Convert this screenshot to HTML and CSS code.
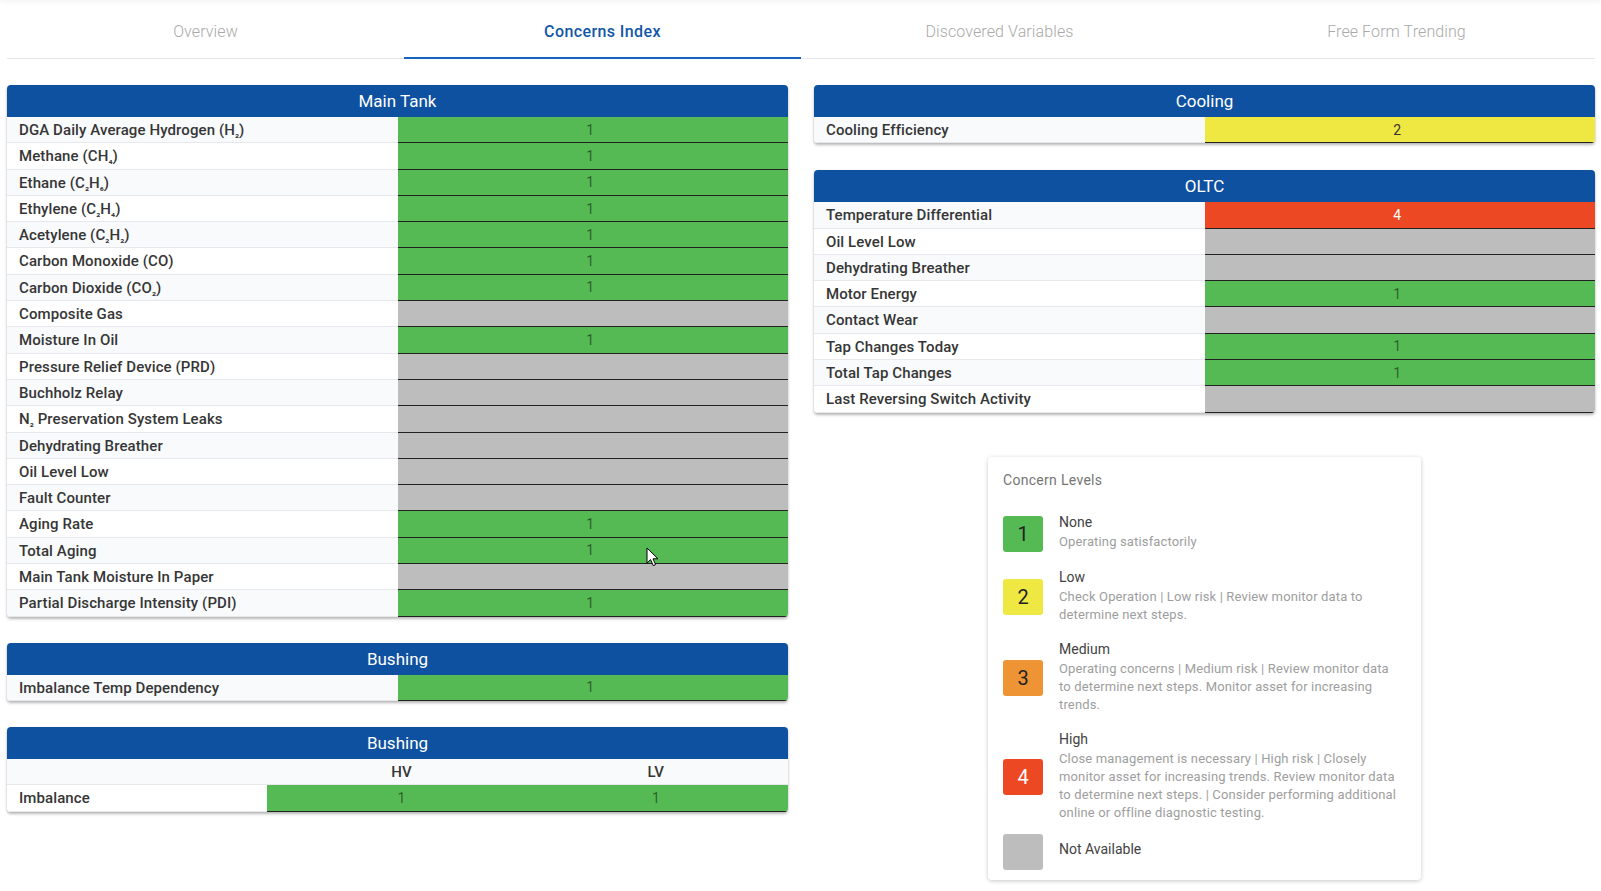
FILE: index.html
```html
<!DOCTYPE html>
<html lang="en">
<head>
<meta charset="utf-8">
<title>Concerns Index</title>
<link rel="stylesheet" href="styles.css">
</head>
<body>
<div class="topbar"></div>

<nav class="tabs">
  <a class="tab">Overview</a>
  <a class="tab active">Concerns Index</a>
  <a class="tab">Discovered Variables</a>
  <a class="tab">Free Form Trending</a>
</nav>

<main class="dashboard">
  <section class="column column-left">
    <div class="panel">
      <div class="panel-title">Main Tank</div>
      <div class="panel-body">
        <div class="row"><span class="label">DGA Daily Average Hydrogen (H<span class="sub">₂</span>)</span><span class="value lvl-1">1</span></div>
        <div class="row"><span class="label">Methane (CH<span class="sub">₄</span>)</span><span class="value lvl-1">1</span></div>
        <div class="row"><span class="label">Ethane (C<span class="sub">₂</span>H<span class="sub">₆</span>)</span><span class="value lvl-1">1</span></div>
        <div class="row"><span class="label">Ethylene (C<span class="sub">₂</span>H<span class="sub">₄</span>)</span><span class="value lvl-1">1</span></div>
        <div class="row"><span class="label">Acetylene (C<span class="sub">₂</span>H<span class="sub">₂</span>)</span><span class="value lvl-1">1</span></div>
        <div class="row"><span class="label">Carbon Monoxide (CO)</span><span class="value lvl-1">1</span></div>
        <div class="row"><span class="label">Carbon Dioxide (CO<span class="sub">₂</span>)</span><span class="value lvl-1">1</span></div>
        <div class="row"><span class="label">Composite Gas</span><span class="value lvl-na"></span></div>
        <div class="row"><span class="label">Moisture In Oil</span><span class="value lvl-1">1</span></div>
        <div class="row"><span class="label">Pressure Relief Device (PRD)</span><span class="value lvl-na"></span></div>
        <div class="row"><span class="label">Buchholz Relay</span><span class="value lvl-na"></span></div>
        <div class="row"><span class="label">N<span class="sub">₂</span> Preservation System Leaks</span><span class="value lvl-na"></span></div>
        <div class="row"><span class="label">Dehydrating Breather</span><span class="value lvl-na"></span></div>
        <div class="row"><span class="label">Oil Level Low</span><span class="value lvl-na"></span></div>
        <div class="row"><span class="label">Fault Counter</span><span class="value lvl-na"></span></div>
        <div class="row"><span class="label">Aging Rate</span><span class="value lvl-1">1</span></div>
        <div class="row"><span class="label">Total Aging</span><span class="value lvl-1">1</span></div>
        <div class="row"><span class="label">Main Tank Moisture In Paper</span><span class="value lvl-na"></span></div>
        <div class="row"><span class="label">Partial Discharge Intensity (PDI)</span><span class="value lvl-1">1</span></div>
      </div>
    </div>

    <div class="panel">
      <div class="panel-title">Bushing</div>
      <div class="panel-body">
        <div class="row"><span class="label">Imbalance Temp Dependency</span><span class="value lvl-1">1</span></div>
      </div>
    </div>

    <div class="panel">
      <div class="panel-title">Bushing</div>
      <div class="panel-body">
        <div class="row row-3 row-head"><span class="label"></span><span class="head col-hv">HV</span><span class="head col-lv">LV</span></div>
        <div class="row row-3"><span class="label">Imbalance</span><span class="value lvl-1 col-hv">1</span><span class="value lvl-1 col-lv">1</span></div>
      </div>
    </div>
  </section>

  <section class="column column-right">
    <div class="panel">
      <div class="panel-title">Cooling</div>
      <div class="panel-body">
        <div class="row"><span class="label">Cooling Efficiency</span><span class="value lvl-2">2</span></div>
      </div>
    </div>

    <div class="panel">
      <div class="panel-title">OLTC</div>
      <div class="panel-body">
        <div class="row"><span class="label">Temperature Differential</span><span class="value lvl-4">4</span></div>
        <div class="row"><span class="label">Oil Level Low</span><span class="value lvl-na"></span></div>
        <div class="row"><span class="label">Dehydrating Breather</span><span class="value lvl-na"></span></div>
        <div class="row"><span class="label">Motor Energy</span><span class="value lvl-1">1</span></div>
        <div class="row"><span class="label">Contact Wear</span><span class="value lvl-na"></span></div>
        <div class="row"><span class="label">Tap Changes Today</span><span class="value lvl-1">1</span></div>
        <div class="row"><span class="label">Total Tap Changes</span><span class="value lvl-1">1</span></div>
        <div class="row"><span class="label">Last Reversing Switch Activity</span><span class="value lvl-na"></span></div>
      </div>
    </div>

    <aside class="legend">
      <div class="legend-title">Concern Levels</div>
      <ul class="legend-list">
        <li class="level">
          <span class="swatch lvl-1">1</span>
          <div class="level-text">
            <div class="level-name">None</div>
            <div class="level-desc">Operating satisfactorily</div>
          </div>
        </li>
        <li class="level">
          <span class="swatch lvl-2">2</span>
          <div class="level-text">
            <div class="level-name">Low</div>
            <div class="level-desc">Check Operation | Low risk | Review monitor data to<br>determine next steps.</div>
          </div>
        </li>
        <li class="level">
          <span class="swatch lvl-3">3</span>
          <div class="level-text">
            <div class="level-name">Medium</div>
            <div class="level-desc">Operating concerns | Medium risk | Review monitor data<br>to determine next steps. Monitor asset for increasing<br>trends.</div>
          </div>
        </li>
        <li class="level">
          <span class="swatch lvl-4">4</span>
          <div class="level-text">
            <div class="level-name">High</div>
            <div class="level-desc">Close management is necessary | High risk | Closely<br>monitor asset for increasing trends. Review monitor data<br>to determine next steps. | Consider performing additional<br>online or offline diagnostic testing.</div>
          </div>
        </li>
        <li class="level level-na">
          <span class="swatch lvl-na"></span>
          <div class="level-text">
            <div class="level-name">Not Available</div>
          </div>
        </li>
      </ul>
    </aside>
  </section>
</main>

<svg class="pointer" width="14" height="21" viewBox="0 0 14 21" aria-hidden="true">
  <path d="M1 1 L1 16 L4.6 12.6 L7.2 18.6 L9.6 17.6 L7 11.8 L12 11.8 Z" fill="#fff" stroke="#000" stroke-width="1" stroke-linejoin="round"/>
</svg>
</body>
</html>
```

FILE: styles.css
```css
* {
  box-sizing: border-box;
}

html, body {
  margin: 0;
  padding: 0;
  background: #fff;
}

body {
  font-family: Roboto, "Liberation Sans", Arial, sans-serif;
  color: #333;
  position: relative;
  min-height: 891px;
}

/* faint edge of the app bar above the tabs */
.topbar {
  height: 0;
  box-shadow: 0 0 4px 1px rgba(0, 0, 0, 0.10);
}

/* ---- tab strip ---- */
.tabs {
  display: grid;
  grid-template-columns: repeat(4, 1fr);
  margin: 0 6px 0 7px;
  height: 59px;
  border-bottom: 1px solid #e4e8ee;
}

.tab {
  display: flex;
  align-items: center;
  justify-content: center;
  height: 59px;
  padding-top: 6px;
  margin-bottom: -1px;
  border-bottom: 2px solid transparent;
  font-size: 16px;
  font-weight: 300;
  color: #a9a9a9;
  letter-spacing: 0.1px;
  cursor: pointer;
}

.tab.active {
  color: #1257a8;
  font-weight: 500;
  letter-spacing: 0.4px;
  border-bottom-color: #1565c0;
}

/* ---- panels ---- */
.dashboard {
  display: grid;
  grid-template-columns: 1fr 1fr;
  column-gap: 26px;
  align-items: start;
  margin: 26px 6px 0 7px;
}

.column {
  display: flex;
  flex-direction: column;
  gap: 26px;
}

.column-right {
  gap: 27px;
}

.panel {
  background: #fff;
  border-radius: 4px;
  overflow: hidden;
  box-shadow: 0 2px 3px rgba(0, 0, 0, 0.28), 0 0 1px rgba(0, 0, 0, 0.12);
}

.panel-title {
  height: 32px;
  line-height: 33px;
  background: #0e51a0;
  color: #fff;
  font-size: 17px;
  text-align: center;
}

.row {
  display: grid;
  grid-template-columns: 1fr 1fr;
  height: 26.3px;
  font-size: 14px;
}

.row-3 {
  grid-template-columns: 1fr 1fr 1fr;
}

.label {
  display: block;
  padding-top: 1px;
  line-height: 24.3px;
  padding-left: 12px;
  font-size: 15px;
  font-weight: 500;
  letter-spacing: 0.1px;
  color: #363636;
  background: #fff;
  border-bottom: 1px solid #e6e8ec;
  white-space: nowrap;
  overflow: hidden;
}

/* chemical formula subscripts */
.sub {
  font-size: 11px;
  position: relative;
  top: 1px;
  letter-spacing: 0;
}

.row:nth-child(odd) .label,
.row-head {
  background: #f9fafc;
}

.row-head {
  border-bottom: 1px solid #e6e8ec;
}

.row-head .label {
  background: transparent;
  border-bottom: 0;
}

.head {
  display: flex;
  align-items: center;
  justify-content: center;
  font-size: 15px;
  font-weight: 500;
  color: #363636;
}

.value {
  display: flex;
  align-items: center;
  justify-content: center;
  padding-right: 5px;
  border-bottom: 1px solid #222;
  font-weight: 400;
}

.row-3 .col-hv {
  padding: 0 0 0 8px;
}

.row-3 .col-lv {
  padding: 0 4px 0 0;
}

/* concern level colours */
.lvl-1 { background: #56ba54; color: rgba(0, 0, 0, 0.5); }
.lvl-2 { background: #f0e842; color: #333; }
.lvl-3 { background: #ee9434; color: #222; }
.lvl-4 { background: #ed4824; color: #fff; }
.lvl-na { background: #bdbdbd; }

/* ---- legend ---- */
.legend {
  align-self: center;
  width: 433px;
  margin-top: 17px;
  padding: 13px 12px 10px 15px;
  background: #fff;
  border-radius: 4px;
  box-shadow: 0 1px 4px rgba(0, 0, 0, 0.22);
}

.legend-title {
  font-size: 14px;
  line-height: 20px;
  letter-spacing: 0.3px;
  color: #757575;
}

.legend-list {
  list-style: none;
  margin: 22px 0 0;
  padding: 0;
}

.level {
  display: flex;
  align-items: center;
  gap: 16px;
  margin-top: 15px;
}

.level:first-child {
  margin-top: 0;
}

.level-na {
  margin-top: 8px;
}

.swatch {
  flex: 0 0 40px;
  height: 36px;
  margin-top: 4px;
  border-radius: 3px;
  display: flex;
  align-items: center;
  justify-content: center;
  font-size: 20px;
  color: #222;
}

.swatch.lvl-4 {
  color: #fff;
}

.level-text {
  flex: 1;
  min-width: 0;
}

.level-name {
  font-size: 14px;
  line-height: 21px;
  color: #424242;
}

.level-desc {
  font-size: 13px;
  line-height: 18px;
  color: #9e9e9e;
  letter-spacing: 0.15px;
  white-space: nowrap;
}

/* mouse pointer resting over the table */
.pointer {
  position: absolute;
  left: 646px;
  top: 547px;
}
```
